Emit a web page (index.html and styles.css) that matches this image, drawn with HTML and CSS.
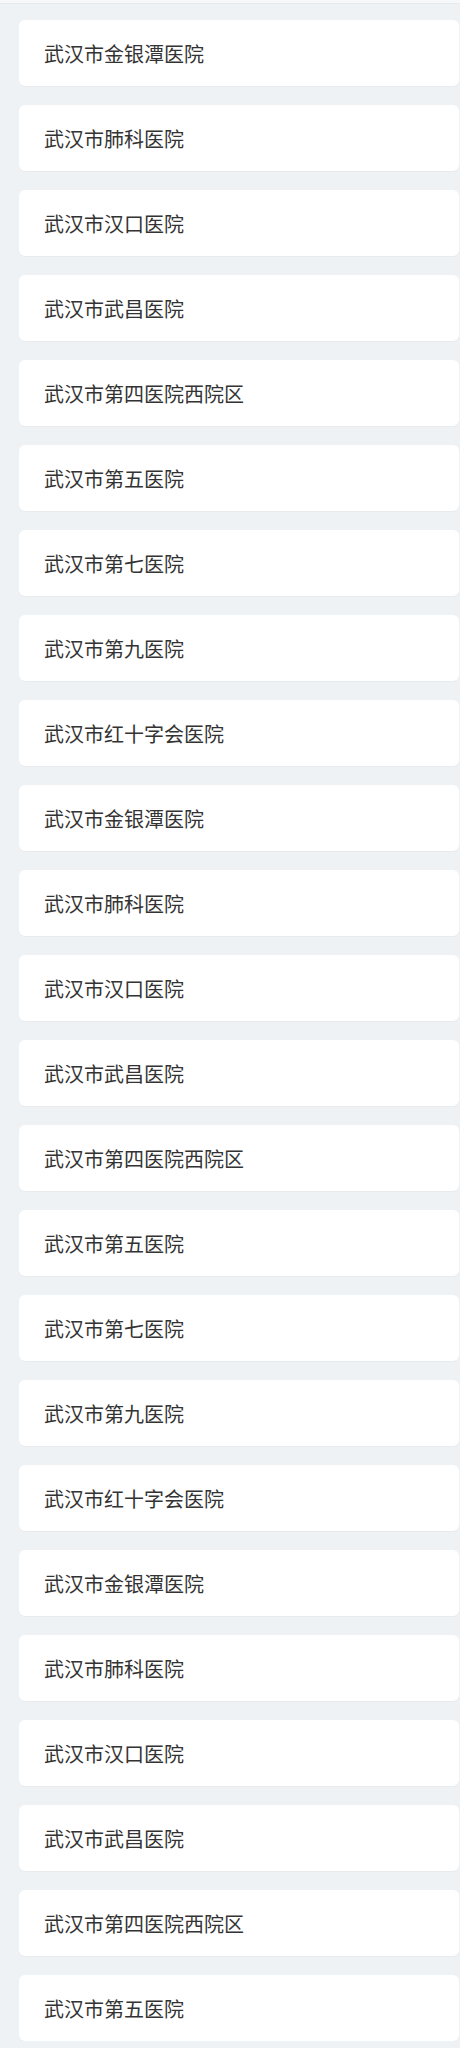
FILE: index.html
```html
<!DOCTYPE html>
<html lang="zh-CN">
<head>
<meta charset="utf-8">
<title>医院列表</title>
<link rel="stylesheet" href="styles.css">
</head>
<body>
<div class="topbar"></div>
<ul class="list">
  <li class="card">武汉市金银潭医院</li>
  <li class="card">武汉市肺科医院</li>
  <li class="card">武汉市汉口医院</li>
  <li class="card">武汉市武昌医院</li>
  <li class="card">武汉市第四医院西院区</li>
  <li class="card">武汉市第五医院</li>
  <li class="card">武汉市第七医院</li>
  <li class="card">武汉市第九医院</li>
  <li class="card">武汉市红十字会医院</li>
  <li class="card">武汉市金银潭医院</li>
  <li class="card">武汉市肺科医院</li>
  <li class="card">武汉市汉口医院</li>
  <li class="card">武汉市武昌医院</li>
  <li class="card">武汉市第四医院西院区</li>
  <li class="card">武汉市第五医院</li>
  <li class="card">武汉市第七医院</li>
  <li class="card">武汉市第九医院</li>
  <li class="card">武汉市红十字会医院</li>
  <li class="card">武汉市金银潭医院</li>
  <li class="card">武汉市肺科医院</li>
  <li class="card">武汉市汉口医院</li>
  <li class="card">武汉市武昌医院</li>
  <li class="card">武汉市第四医院西院区</li>
  <li class="card">武汉市第五医院</li>
</ul>
</body>
</html>
```
FILE: styles.css
```css
html, body {
  margin: 0;
  padding: 0;
  background: #eef2f5;
  font-family: "Noto Sans CJK SC", "Noto Sans", sans-serif;
}
.topbar {
  height: 3px;
  background: #f6f8fa;
  border-bottom: 1px solid #e6eaee;
}
.list {
  list-style: none;
  margin: 0;
  padding: 16px 1px 0 19px;
  display: flex;
  flex-direction: column;
  gap: 19px;
}
.card {
  height: 66px;
  box-sizing: border-box;
  background: #ffffff;
  border-radius: 6px;
  box-shadow: 0 1px 1px rgba(0, 0, 0, 0.03);
  display: flex;
  align-items: center;
  padding-left: 25px;
  font-size: 20px;
  color: #333333;
}
```
